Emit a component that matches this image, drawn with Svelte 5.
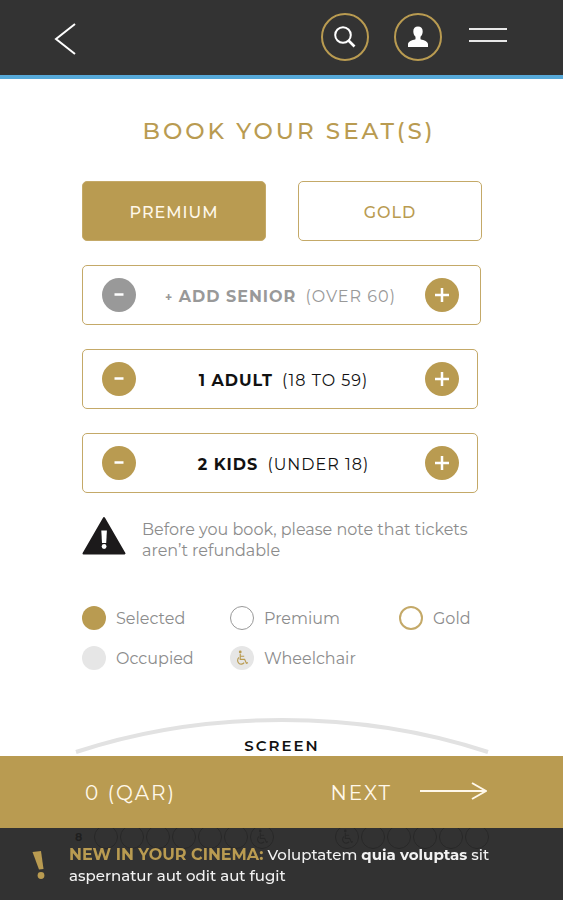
<script>
  const classes = ['Premium', 'Gold'];
  let seatClass = $state('Premium');

  let groups = $state([
    { name: 'Senior', ages: '(OVER 60)', count: 0 },
    { name: 'Adult', ages: '(18 TO 59)', count: 1 },
    { name: 'Kids', ages: '(UNDER 18)', count: 2 }
  ]);

  const legend = ['Selected', 'Premium', 'Gold', 'Occupied', 'Wheelchair'];
  const leftSeats = ['', '', '', '', '', '', 'wheelchair'];
  const rightSeats = ['wheelchair', '', '', '', '', ''];
</script>

{#snippet wheelchair()}
  <svg class="chair" viewBox="0 0 16 18" aria-hidden="true">
    <circle cx="6" cy="2" r="1.6" fill="currentColor" />
    <path d="M6 4v6.500h5l2 4.500 1.800-.7M6 7h4.500M4.500 8.500a4.200 4.200 0 1 0 6 5.800" fill="none" stroke="currentColor" stroke-width="1.300" />
  </svg>
{/snippet}

<header>
  <button class="back" aria-label="Back">
    <svg width="22" height="32" viewBox="0 0 22 32"><path d="M21 1 2 16l19 15" fill="none" stroke="#fff" stroke-width="2" /></svg>
  </button>
  <nav>
    <button class="ring" aria-label="Search">
      <svg width="24" height="24" viewBox="0 0 24 24"><circle cx="10" cy="10" r="7.800" fill="none" stroke="#fff" stroke-width="2" /><path d="m15.500 15.500 6 6" stroke="#fff" stroke-width="2.600" /></svg>
    </button>
    <button class="ring" aria-label="Account">
      <svg width="24" height="24" viewBox="0 0 24 24"><path d="M12 1.500c3 0 4.700 2 4.700 4.800 0 2.400-.9 4.300-2.200 5.400v2.600c3.600 1 7.500 2.300 7.500 5V22H2v-2.700c0-2.700 3.900-4 7.500-5v-2.600C8.200 10.600 7.300 8.700 7.300 6.300 7.300 3.500 9 1.500 12 1.500z" fill="#fff" /></svg>
    </button>
    <button class="menu" aria-label="Menu">
      <svg width="38" height="16" viewBox="0 0 38 16"><path d="M0 2h38M0 14h38" stroke="#e8e8e8" stroke-width="2" /></svg>
    </button>
  </nav>
</header>

<main>
  <h1>BOOK YOUR SEAT(S)</h1>

  <div class="classes">
    {#each classes as name}
      <button class:active={seatClass === name} onclick={() => (seatClass = name)}>{name.toUpperCase()}</button>
    {/each}
  </div>

  <div class="counters">
    {#each groups as group}
      <div class="counter" class:empty={group.count === 0}>
        <button class="step minus" aria-label="Remove {group.name}" disabled={group.count === 0} onclick={() => group.count--}>
          <svg width="34" height="34" viewBox="0 0 34 34"><path d="M12.500 16.500h9" stroke="#fff" stroke-width="2.500" /></svg>
        </button>
        <p>
          {#if group.count === 0}<b><small>+</small> ADD {group.name.toUpperCase()}</b>{:else}<b>{group.count} {group.name.toUpperCase()}</b>{/if}
          <span>{group.ages}</span>
        </p>
        <button class="step" aria-label="Add {group.name}" onclick={() => group.count++}>
          <svg width="34" height="34" viewBox="0 0 34 34"><path d="M10 17h14M17 10v14" stroke="#fff" stroke-width="2.500" /></svg>
        </button>
      </div>
    {/each}
  </div>

  <div class="notice">
    <svg width="44" height="40" viewBox="0 0 44 40" aria-hidden="true">
      <path d="M22 2 42.500 37.500h-41z" fill="#1c1a1b" stroke="#1c1a1b" stroke-width="2" stroke-linejoin="round" />
      <path d="M19.300 14.500h5.600L24.200 27h-4.200z" fill="#fff" />
      <circle cx="22.100" cy="30.500" r="2.400" fill="#fff" />
    </svg>
    <p>Before you book, please note that tickets aren’t refundable</p>
  </div>

  <ul class="legend">
    {#each legend as item}
      <li>
        <span class="dot {item.toLowerCase()}">{#if item === 'Wheelchair'}{@render wheelchair()}{/if}</span>
        {item}
      </li>
    {/each}
  </ul>

  <section class="hall">
    <svg class="arc" viewBox="0 0 414 36" aria-hidden="true"><path d="M1 34Q98 2 207 2t206 32" fill="none" stroke="#e2e2e2" stroke-width="4" /></svg>
    <h2>SCREEN</h2>
    <div class="row">
      <b>8</b>
      <div class="seats">
        {#each leftSeats as seat}<span class="seat">{#if seat}{@render wheelchair()}{/if}</span>{/each}
      </div>
      <div class="seats right">
        {#each rightSeats as seat}<span class="seat">{#if seat}{@render wheelchair()}{/if}</span>{/each}
      </div>
    </div>
  </section>
</main>

<footer>
  <div class="checkout">
    <span class="label">0 (QAR)</span>
    <button>
      <span class="label">NEXT</span>
      <svg width="68" height="20" viewBox="0 0 68 20" aria-hidden="true"><path d="M1 9h65M53 1l14 8-14 8" fill="none" stroke="#fff8ea" stroke-width="2" /></svg>
    </button>
  </div>
  <div class="news">
    <svg width="14" height="30" viewBox="0 0 14 30" aria-hidden="true"><path d="M.5 2 9 1l2.500 18-4.500.5z" fill="#b99b51" /><circle cx="9" cy="25.500" r="3.400" fill="#b99b51" /></svg>
    <p><b class="lead">NEW IN YOUR CINEMA:</b> Voluptatem <b>quia voluptas</b> sit aspernatur aut odit aut fugit</p>
  </div>
</footer>

<style>
  :global(body) {
    margin: 0;
    background: #fff;
    font-family: Montserrat, Inter, "Liberation Sans", sans-serif;
    font-size: 16px;
    line-height: 21px;
    color: #111;
  }
  h1, h2, p, ul { margin: 0; padding: 0; }
  button {
    font: inherit;
    color: inherit;
    padding: 0;
    border: 0;
    background: none;
    cursor: pointer;
  }
  svg { display: block; flex: none; }

  header {
    display: flex;
    justify-content: space-between;
    align-items: center;
    height: 75px;
    padding: 0 56px 0 54px;
    background: #333;
    border-bottom: 4px solid #56a9d9;
  }
  .back { padding-top: 2px; }
  nav { display: flex; align-items: center; gap: 25px; padding-bottom: 2px; }
  .ring {
    display: flex;
    align-items: center;
    justify-content: center;
    box-sizing: border-box;
    width: 48px;
    height: 48px;
    border: 2px solid #b99b51;
    border-radius: 50%;
  }
  .menu { padding: 0 0 4px 2px; }

  main { padding: 38px 81px 48px 82px; }
  h1 {
    font-size: 23px;
    line-height: 28px;
    font-weight: 500;
    letter-spacing: 3px;
    text-align: center;
    padding-left: 14px;
    color: #b99b51;
  }

  .classes { display: flex; gap: 32px; margin-top: 36px; }
  .classes button {
    flex: 1;
    height: 60px;
    padding-top: 2px;
    border: 1px solid #c4a968;
    border-radius: 5px;
    letter-spacing: 1px;
    font-weight: 500;
    color: #b99b51;
  }
  .classes .active { background: #b99b51; color: #fff8ea; }

  .counters {
    display: flex;
    flex-direction: column;
    gap: 24px;
    margin-top: 24px;
    padding-right: 4px;
  }
  .counter {
    display: flex;
    align-items: center;
    justify-content: space-between;
    box-sizing: border-box;
    height: 60px;
    padding: 0 18px 0 19px;
    border: 1px solid #c4a968;
    border-radius: 5px;
  }
  .counter p { padding: 2px 0 0 6px; letter-spacing: 1px; }
  .counter span { margin-left: 4px; }
  .counter small { font-size: 12px; }
  .counter.empty { margin-right: -3px; padding-right: 21px; color: #999; }
  .counter.empty p { padding: 4px 0 0; }
  .step { width: 34px; height: 34px; border-radius: 50%; background: #b99b51; }
  .empty .minus { background: #999; }

  .notice { display: flex; gap: 16px; margin-top: 23px; color: #8c8c8c; }
  .notice p { padding-top: 3px; }

  .legend {
    display: grid;
    grid-template-columns: 148fr 169fr 83fr;
    row-gap: 14px;
    margin-top: 44px;
    list-style: none;
    color: #8c8c8c;
  }
  .legend li { display: flex; align-items: center; gap: 10px; height: 26px; }
  .dot {
    display: flex;
    align-items: center;
    justify-content: center;
    box-sizing: border-box;
    width: 24px;
    height: 24px;
    border-radius: 50%;
  }
  .selected { background: #b99b51; }
  .premium { border: 1px solid #999; }
  .gold { border: 2px solid #c4a968; }
  .occupied, .wheelchair { background: #e6e6e6; }
  .wheelchair { color: #b99b51; }
  .chair { width: 14px; height: 16px; }

  .hall { margin: 47px -7px 0; }
  .arc { width: 100%; }
  h2 {
    margin-top: -18px;
    font-size: 15px;
    line-height: 20px;
    font-weight: 600;
    letter-spacing: 2px;
    text-align: center;
  }
  .row { display: flex; align-items: center; gap: 12px; margin-top: 69px; }
  .row b { font-size: 11px; }
  .right { margin-left: auto; }
  .seats { display: flex; gap: 2px; }
  .seat {
    display: flex;
    align-items: center;
    justify-content: center;
    box-sizing: border-box;
    width: 24px;
    height: 24px;
    border: 1px solid #777;
    border-radius: 50%;
    color: #777;
  }

  footer { position: fixed; left: 0; right: 0; bottom: 0; }
  .checkout {
    display: flex;
    align-items: center;
    justify-content: space-between;
    height: 72px;
    padding: 0 76px 0 85px;
    background: #b99b51;
    color: #fff8ea;
    font-size: 20px;
    letter-spacing: 2px;
  }
  .checkout button { display: flex; align-items: center; gap: 27px; letter-spacing: 2px; }
  .label { padding-top: 3px; }
  .news {
    display: flex;
    align-items: center;
    gap: 23px;
    box-sizing: border-box;
    height: 72px;
    padding: 2px 56px 0 32px;
    background: rgba(33, 33, 33, 0.92);
    color: #f2f2f2;
    font-size: 15px;
    font-weight: 500;
  }
  .lead { font-size: 16px; color: #b99b51; }
</style>
